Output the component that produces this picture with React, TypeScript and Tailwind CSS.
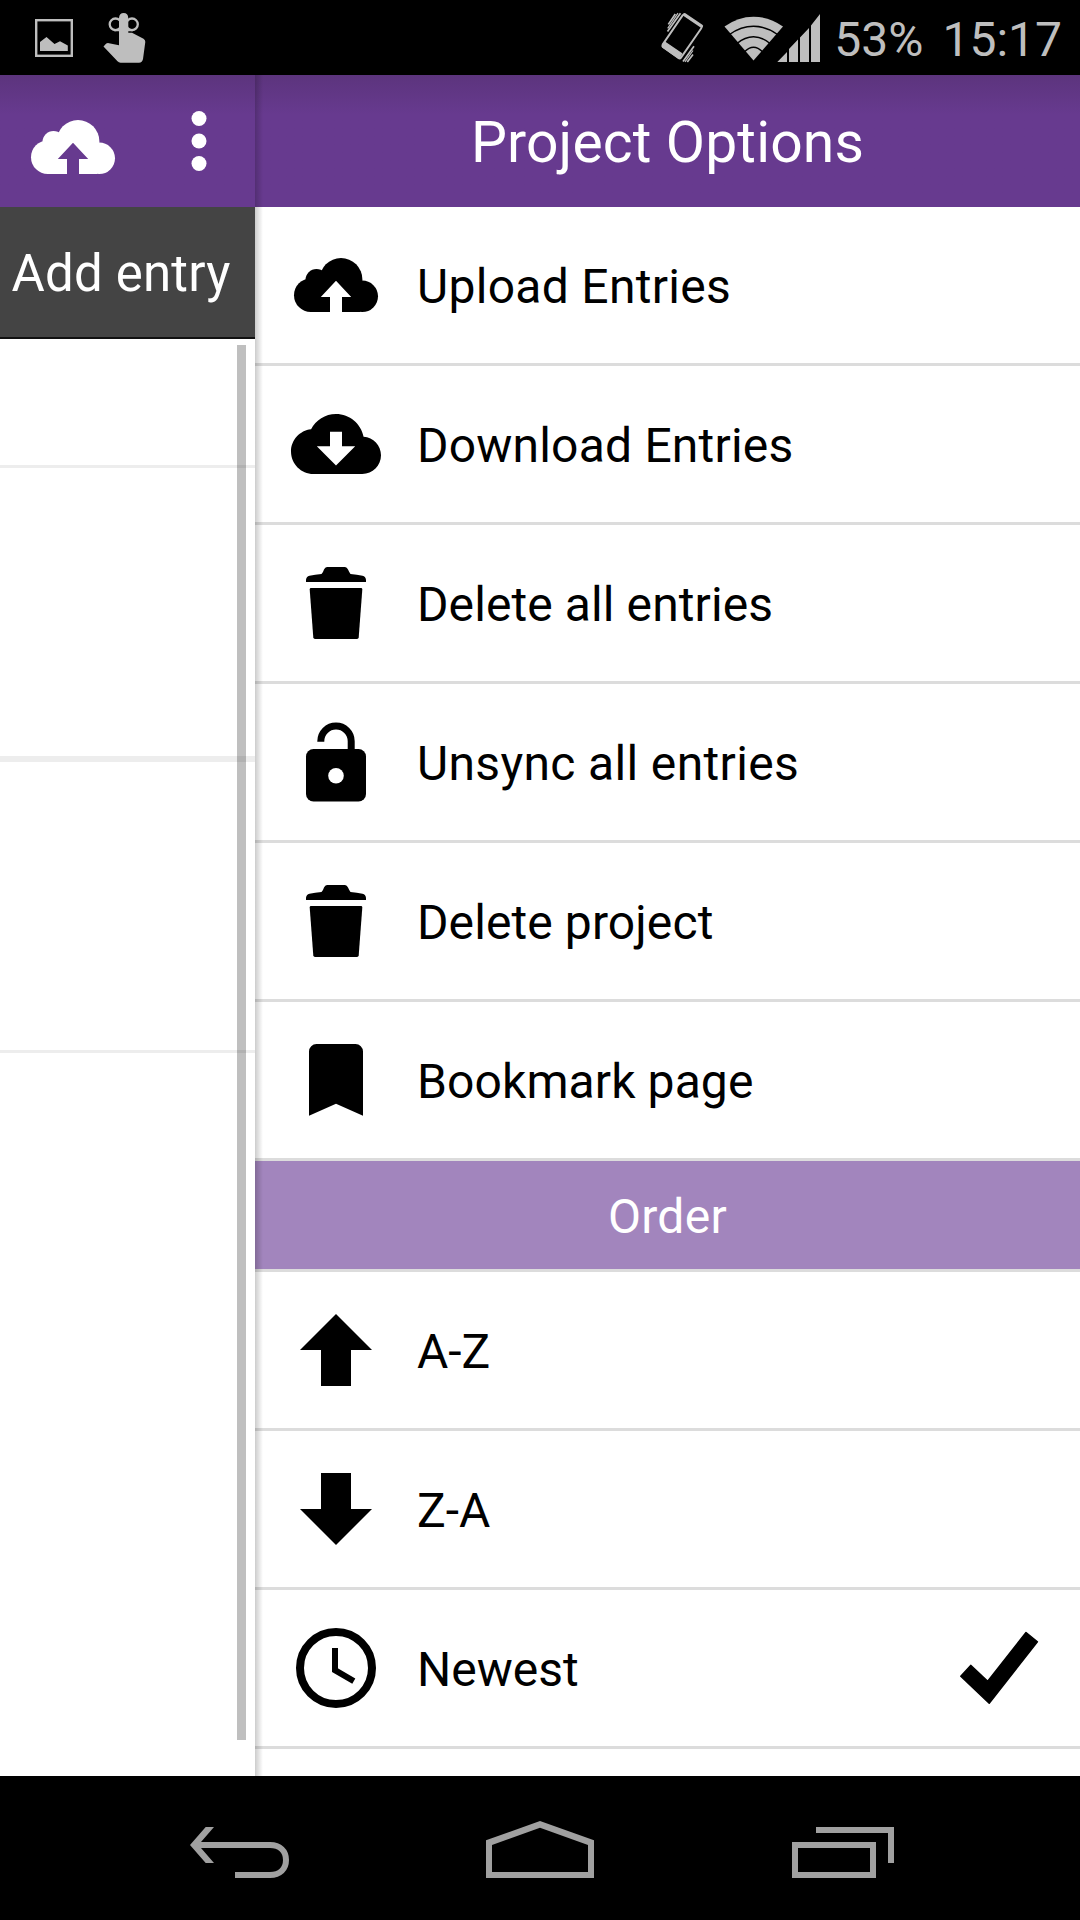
import type { ReactNode } from "react";

function Glyph({ children, className = "" }: { children: ReactNode; className?: string }) {
  return (
    <svg viewBox="0 0 96 96" className={`h-24 w-24 shrink-0 ${className}`} fill="currentColor">
      {children}
    </svg>
  );
}

function UploadCloud({ arrow }: { arrow: string }) {
  return (
    <>
      <circle cx="22.8" cy="58.2" r="16.8" />
      <circle cx="28.5" cy="43" r="11" />
      <circle cx="53" cy="42.4" r="21.4" />
      <circle cx="74.2" cy="59.3" r="15.8" />
      <path d="M22 42H72V75H22z" />
      <path d="M48 43.7L63.2 60H54V76H42V60H32.8z" fill={arrow} />
    </>
  );
}

const downloadIcon = (
  <>
    <path
      transform="translate(3 3) scale(3.75)"
      d="M19.35 10.04C18.67 6.59 15.64 4 12 4 9.11 4 6.6 5.64 5.35 8.04 2.34 8.36 0 10.91 0 14c0 3.31 2.69 6 6 6h13c2.76 0 5-2.24 5-5 0-2.64-2.05-4.78-4.65-4.96z"
    />
    <path d="M42 35.8H54V50.2H67.2L48 69.5L28.8 50.2H42z" fill="#fff" />
  </>
);

const trashIcon = (
  <>
    <path d="M18 27V25Q18.2 21.5 21.5 20.8Q27 19.6 33.5 18.9Q35 18 36 14.6Q37 12 39 12H57Q59 12 60 14.6Q61.5 18 62.5 18.9Q69 19.6 74.5 20.8Q77.8 21.5 78 25V27z" />
    <path d="M23 33H73Q74.4 33 74.3 34.4L70.7 82.6Q70.5 84 69 84H27Q25.5 84 25.3 82.6L21.7 34.4Q21.6 33 23 33z" />
  </>
);

const unlockIcon = (
  <>
    <rect x="18" y="35" width="60" height="52.5" rx="7.5" />
    <circle cx="48" cy="61.7" r="7.8" fill="#fff" />
    <path d="M32.8 27.8V27.3a15.2 15.2 0 0 1 30.4 0V37" fill="none" stroke="currentColor" strokeWidth="7" />
  </>
);

const bookmarkIcon = <path d="M28.5 12H67.5A7.5 7.5 0 0 1 75 19.5V83.8L48 71.7L21 83.8V19.5A7.5 7.5 0 0 1 28.5 12z" />;
const upIcon = <path d="M48 12L84 48H63V84H33V48H12z" />;
const downIcon = <path d="M48 84L84 48H63V12H33V48H12z" />;
const clockIcon = (
  <g fill="none" stroke="currentColor">
    <circle cx="48" cy="48" r="36" strokeWidth="8" />
    <path d="M47 28V50.2L65.8 61.2" strokeWidth="6" />
  </g>
);
const checkIcon = (
  <path
    d="M8.8 56.3L18.7 45.4L35.7 61.2L74 12.5L85.4 21.8L37.2 83.2z"
    stroke="currentColor"
    strokeWidth="1.5"
    strokeLinejoin="round"
  />
);

const actions = [
  { label: "Upload Entries", icon: <UploadCloud arrow="#fff" />, tracking: "tracking-[0.3px]" },
  { label: "Download Entries", icon: downloadIcon, tracking: "tracking-[0.2px]" },
  { label: "Delete all entries", icon: trashIcon, tracking: "tracking-[0.1px]" },
  { label: "Unsync all entries", icon: unlockIcon, tracking: "tracking-[0.35px]" },
  { label: "Delete project", icon: trashIcon, tracking: "tracking-[0.1px]" },
  { label: "Bookmark page", icon: bookmarkIcon, tracking: "tracking-[0.1px]" },
];

const orders = [
  { label: "A-Z", icon: upIcon, checked: false },
  { label: "Z-A", icon: downIcon, checked: false },
  { label: "Newest", icon: clockIcon, checked: true },
];

type RowProps = { label: string; icon: ReactNode; checked?: boolean; tracking?: string };

function Row({ label, icon, checked, tracking = "tracking-normal" }: RowProps) {
  return (
    <li className="flex h-[159px] shrink-0 items-center border-b-[3px] border-[#dcdcdc] pr-8 pl-[33px]">
      <Glyph>{icon}</Glyph>
      <span className={`ml-[33px] flex-1 pt-[3px] text-[48px] leading-none ${tracking}`}>{label}</span>
      {checked && <Glyph>{checkIcon}</Glyph>}
    </li>
  );
}

function StatusBar() {
  return (
    <header className="flex h-[75px] shrink-0 items-center bg-black pr-[18px] pl-[35px] text-[#bebebe]">
      <svg viewBox="35 19 38 38" className="h-[38px] w-[38px]" fill="currentColor">
        <rect x="36.2" y="20.2" width="35.6" height="35.6" fill="none" stroke="currentColor" strokeWidth="2.4" />
        <path d="M40 51V42L46.5 37L54.5 44L60 41.3L67.8 45.5V51z" />
      </svg>
      <svg viewBox="103 12 43 52" className="ml-[30px] h-[52px] w-[43px]" fill="currentColor">
        <g fill="none" stroke="currentColor" strokeWidth="2.3">
          <circle cx="115.5" cy="24.3" r="5.8" />
          <circle cx="132" cy="24.3" r="5.8" />
          <path d="M114 30.1H133" />
        </g>
        <path d="M119 44V18Q119.3 13 123.7 13Q128 13 128.3 18V32.8H132L143.5 38.7Q145.5 40 145.3 42L143 59Q142.3 62.7 139 62.7H120.5Q118.8 62.7 117.5 61.3L103.5 46.5L106 43.8Q107.2 42.8 109 43.2L119 45.3z" />
      </svg>

      <svg viewBox="660 12 44 51" className="ml-auto h-[51px] w-[44px]" fill="none" stroke="currentColor">
        <path
          d="M684.3 14.8L701 25.8Q702.2 26.8 701.3 28.2L681 57.6Q680 59 678.6 58L663 47Q661.8 46 662.6 44.6L682.6 15.4Q683.3 14.3 684.3 14.8z"
          strokeWidth="1.9"
        />
        <path d="M684.5 14.7L701.5 26.2" strokeWidth="3.2" strokeLinecap="round" />
        <path d="M664.6 42L681.5 53.6L678.9 58.4L662.6 47z" fill="currentColor" strokeWidth="1.5" strokeLinejoin="round" />
        <path d="M675.3 14L668.3 24.4M680.5 13.2L667.5 31.5M694 46.2L683 61.5M693 54.5L687.3 62" strokeWidth="1.7" />
        <path d="M678 13.2L667.7 28.4M693 50.5L685 61.8" strokeWidth="1.2" />
      </svg>
      <svg viewBox="724 12 96 48" className="ml-5 h-12 w-24" fill="currentColor">
        <path d="M724.5 24.5Q738 14.7 753.5 14.7Q769 14.7 783 24.5L753.5 58.6z" />
        <g fill="none" stroke="#000" strokeWidth="1.5">
          <path d="M729.5 32.5Q741 24.3 753.5 24.3Q766 24.3 777.5 32.5" />
          <path d="M737 41.5Q745 34.8 753.5 34.8Q762 34.8 770 41.5" />
          <path d="M744.5 49.8Q749 45.3 753.5 45.3Q758 45.3 762.5 49.8" />
        </g>
        <path d="M777.3 60L787 50V60zM789 60V47L798 37.5V60zM800 60V35.5L809 26V60zM811 60V23.5L820 12V60z" />
      </svg>
      <span className="ml-[14px] pt-1 text-[48px] leading-none">53%</span>
      <span className="ml-[19px] pt-1 text-[48px] leading-none">15:17</span>
    </header>
  );
}

function ProjectPage() {
  return (
    <section className="flex w-[255px] shrink-0 flex-col bg-white">
      <div className="flex h-[132px] shrink-0 bg-linear-to-b from-[#5c347d] to-[#673a8f] to-30% pt-6 pl-[25px] text-white">
        <Glyph>
          <UploadCloud arrow="#673a8f" />
        </Glyph>
        <svg viewBox="0 0 16 60" className="ml-[70px] mt-3 h-[60px] w-4" fill="currentColor">
          <circle cx="8" cy="7.5" r="7.5" />
          <circle cx="8" cy="30" r="7.5" />
          <circle cx="8" cy="52.5" r="7.5" />
        </svg>
      </div>
      <div className="flex h-[132px] shrink-0 items-center border-b-2 border-[#111] bg-[#444] pl-[11.5px] text-[51px] tracking-[0.2px] whitespace-nowrap text-white">
        <span className="pt-[3px] leading-none">Add entry</span>
      </div>
      <div className="relative flex-1">
        <div className="h-[129px] border-b-[3px] border-[#ededed]" />
        <div className="h-[294px] border-b-[6px] border-[#ededed]" />
        <div className="h-[291px] border-b-[3px] border-[#ededed]" />
        <div className="absolute top-1.5 right-[9px] h-[1395px] w-[9px] bg-black/25" />
      </div>
    </section>
  );
}

function OptionsPanel() {
  return (
    <aside className="relative flex flex-1 flex-col overflow-hidden bg-white">
      <h1 className="flex h-[132px] shrink-0 items-center justify-center bg-linear-to-b from-[#5c347d] to-[#673a8f] to-30% pt-0.5 text-[57px] leading-none tracking-[0.15px] text-white">
        Project Options
      </h1>
      <ul className="flex shrink-0 flex-col">
        {actions.map((a) => (
          <Row key={a.label} {...a} />
        ))}
      </ul>
      <h2 className="flex h-[111px] shrink-0 items-center justify-center border-b-[3px] border-[#dcdcdc] bg-[#a285bd] pt-[3px] text-[48px] leading-none tracking-[0.3px] text-white">
        Order
      </h2>
      <ul className="flex shrink-0 flex-col">
        {orders.map((o) => (
          <Row key={o.label} {...o} />
        ))}
      </ul>
      <div className="absolute inset-y-0 left-0 w-2 bg-linear-to-r from-black/20 to-transparent" />
    </aside>
  );
}

function NavBar() {
  return (
    <footer className="flex h-36 shrink-0 justify-center gap-48 bg-black pt-[43px] text-[#a0a0a0]">
      <svg viewBox="0 0 108 60" className="h-[60px] w-[108px]" fill="currentColor">
        <path d="M4 26L19.7 8H28L15 23V29L28 44H19.7z" />
        <path d="M13 26H84C94 26 100 32 100 41S94 56 84 56H49" fill="none" stroke="currentColor" strokeWidth="6" />
      </svg>
      <svg viewBox="0 0 108 60" className="h-[60px] w-[108px]" fill="currentColor">
        <path fillRule="evenodd" d="M0 21.3L54 2L108 21.3V59H0zM6 26V53H102V26L54 8.7z" />
      </svg>
      <svg viewBox="0 0 108 60" className="h-[60px] w-[108px]" fill="none" stroke="currentColor" strokeWidth="6">
        <path d="M9 26H87V56H9zM30 11H105V44" />
      </svg>
    </footer>
  );
}

export default function App() {
  return (
    <div className="flex h-[1920px] w-[1080px] flex-col overflow-hidden bg-white font-[Roboto,sans-serif] text-black">
      <StatusBar />
      <main className="flex min-h-0 flex-1">
        <ProjectPage />
        <OptionsPanel />
      </main>
      <NavBar />
    </div>
  );
}
